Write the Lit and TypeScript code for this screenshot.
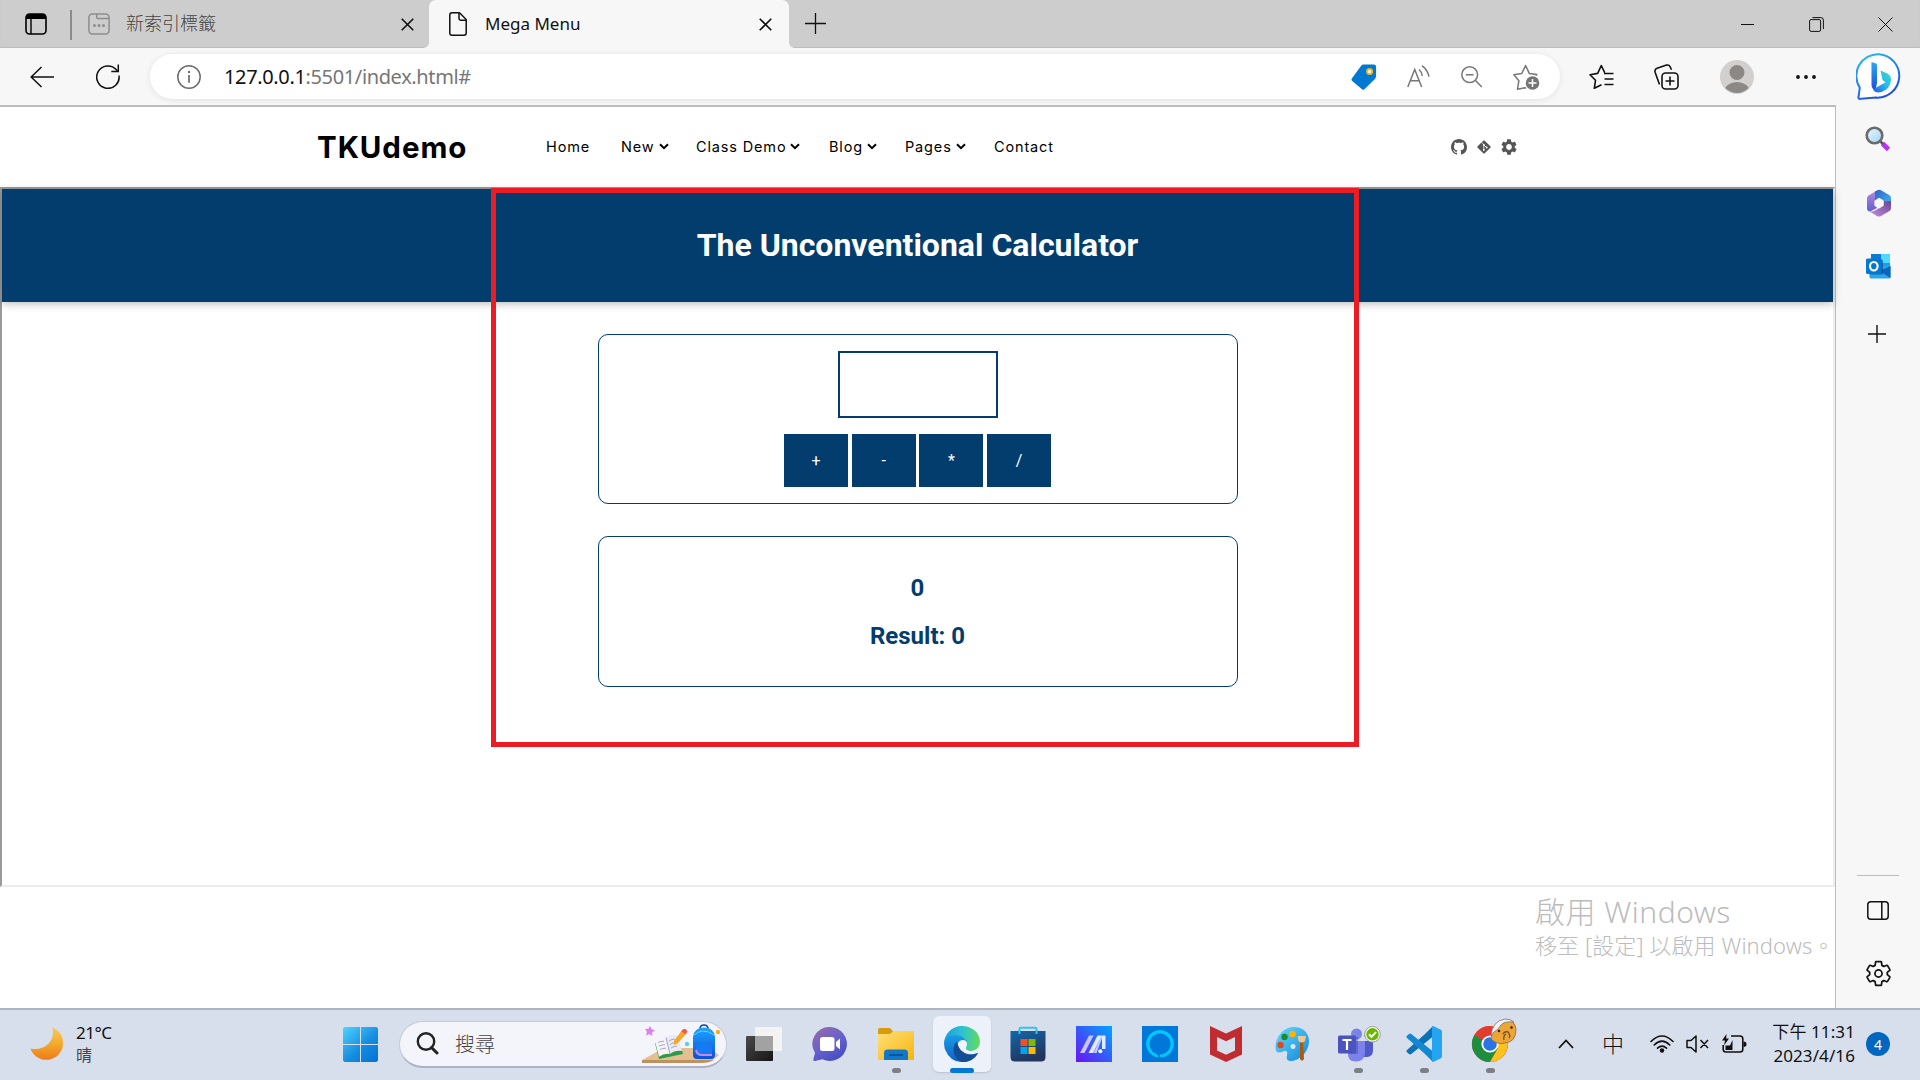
import { LitElement, html, css, svg } from "lit";
import { customElement } from "lit/decorators.js";

const GEAR_OUTER =
  "M19.14 12.94c.04-.3.06-.61.06-.94 0-.32-.02-.64-.07-.94l2.03-1.58a.49.49 0 0 0 .12-.61l-1.92-3.32a.488.488 0 0 0-.59-.22l-2.39.96c-.5-.38-1.03-.7-1.62-.94l-.36-2.54a.484.484 0 0 0-.48-.41h-3.84c-.24 0-.43.17-.47.41l-.36 2.54c-.59.24-1.13.57-1.62.94l-2.39-.96c-.22-.08-.47 0-.59.22L2.74 8.87c-.12.21-.08.47.12.61l2.03 1.58c-.05.3-.09.63-.09.94s.02.64.07.94l-2.03 1.58a.49.49 0 0 0-.12.61l1.92 3.32c.12.22.37.29.59.22l2.39-.96c.5.38 1.03.7 1.62.94l.36 2.54c.05.24.24.41.48.41h3.84c.24 0 .44-.17.47-.41l.36-2.54c.59-.24 1.13-.56 1.62-.94l2.39.96c.22.08.47 0 .59-.22l1.92-3.32c.12-.22.07-.47-.12-.61z";
const GEAR_HOLE =
  "M12 15.6c-1.98 0-3.6-1.62-3.6-3.6s1.62-3.6 3.6-3.6 3.6 1.62 3.6 3.6-1.62 3.6-3.6 3.6z";

const icon = (w: number, h: number, body: unknown, vb?: string) =>
  html`<svg width=${w} height=${h} viewBox=${vb ?? `0 0 ${w} ${h}`} fill="none">${body}</svg>`;

/* ---------- browser chrome ---------- */
const tabActions = icon(22, 22, svg`
  <rect x="1" y="1" width="20" height="20" rx="3.5" stroke="#000" stroke-width="1.6"/>
  <path d="M1 6V4a3 3 0 0 1 3-3h14a3 3 0 0 1 3 3v2z" fill="#000"/><path d="M6 5v16" stroke="#000" stroke-width="1.4"/>`);
const newTabIcon = icon(22, 22, svg`
  <g stroke="#8d8d8d" stroke-width="1.5"><rect x=".9" y=".9" width="20.2" height="20.2" rx="3.5"/>
  <path d="M8.7 1v3.2q0 1.3 1.3 1.3h11"/></g>
  <g fill="#8d8d8d"><circle cx="6.5" cy="12.5" r="1.5"/><circle cx="11" cy="12.5" r="1.5"/><circle cx="15.5" cy="12.5" r="1.5"/></g>`);
const closeIcon = icon(13, 13, svg`<path d="M.7.7l11.6 11.6M12.3.7L.7 12.3" stroke="#111" stroke-width="1.6"/>`);
const docIcon = icon(18, 24, svg`
  <path d="M3 .8h7.500L17.200 7.500V21q0 2.200-2.200 2.200H3Q.8 23.200 .8 21V3Q.8 .8 3 .8z" stroke="#111" stroke-width="1.5" stroke-linejoin="round"/>
  <path d="M10 1v5.500q0 1.700 1.700 1.700H17" stroke="#111" stroke-width="1.5"/>`);
const plusIcon = icon(21, 21, svg`<path d="M10.500 0v21M0 10.500h21" stroke="#111" stroke-width="1.3"/>`);
const minIcon = icon(15, 15, svg`<path d="M1 7.500h13" stroke="#111" stroke-width="1"/>`);
const restoreIcon = icon(15, 15, svg`<rect x=".6" y="2.600" width="11" height="11.800" rx="1.500" stroke="#111"/>
  <path d="M3.500 .6h8.400q2.500 0 2.500 2.500v9" stroke="#111"/>`);
const winClose = icon(15, 15, svg`<path d="M.5.5l14 14M14.500.5l-14 14" stroke="#111" stroke-width="1"/>`);

const backIcon = icon(24, 22, svg`<path d="M24 11H1.200M11.500 1L1.200 11l10.300 10" stroke="#111" stroke-width="1.500"/>`);
const reloadIcon = icon(24, 25, svg`<path d="M23 11.500A11.200 11.200 0 1 1 20.200 5.600L21.500 7.200" stroke="#111" stroke-width="1.500"/>
  <path d="M22.300 .5v7h-7" stroke="#111" stroke-width="1.500"/>`);
const infoIcon = icon(24, 24, svg`<circle cx="12" cy="12" r="11.200" stroke="#6b6b6b" stroke-width="1.500"/>
  <path d="M12 10v7.800" stroke="#6b6b6b" stroke-width="1.700"/><circle cx="12" cy="7" r="1.200" fill="#6b6b6b"/>`);
const tagIcon = icon(26, 26, svg`<path d="M12.500 .6h10.300q2.300 0 2.300 2.300v9.200q0 1.600-1.200 3L13.700 25q-1.500 1.300-3 0L1.200 17q-1.400-1.500 0-3L10 2q1-1.400 2.500-1.400z" fill="#0078d4"/>
  <circle cx="18.600" cy="7.500" r="2.700" fill="#e8eef2" stroke="#f2b705" stroke-width="1.700"/>`);
const readIcon = icon(23, 23, svg`<g stroke="#777" stroke-width="1.500"><path d="M.8 22L7.700 4.500 14.700 22M3.200 15.800h9"/>
  <path d="M12.200 4.500q2.600 2.500 3.100 6.500M15 .6q5.800 4.600 7 11"/></g>`);
const zoomOutIcon = icon(22, 22, svg`<g stroke="#777" stroke-width="1.500"><circle cx="8.700" cy="8.700" r="7.900"/><path d="M14.500 14.500l6.300 6.500M4.800 8.700h7.800"/></g>`);
const starPlus = icon(27, 26, svg`<path d="M13 24.500l-1-.8-7.500 1.500 1.400-8.500L.9 10.700l7.900-1.300L12.600 1.500l3.700 7.900 7.500 1.200-1.800 2" stroke="#777" stroke-width="1.500" stroke-linejoin="round"/>
  <circle cx="19.500" cy="19" r="7.900" fill="#fff"/><circle cx="19.500" cy="19" r="6.800" fill="#757575"/><path d="M19.500 15v8M15.500 19h8" stroke="#fff" stroke-width="1.500"/>`);
const favIcon = icon(26, 25, svg`<path d="M12.500 20.800l-7.200 3.500 1.200-8L1 10.700l7.700-1.300L12.300 1.500l3.400 7.200M15 9.500h9.500M15.500 15h9M15.500 20.500h9" stroke="#111" stroke-width="1.600" stroke-linejoin="round"/>`);
const collIcon = icon(26, 26, svg`<g stroke="#111" stroke-width="1.600"><rect x="8" y="9" width="16" height="16" rx="3.500"/>
  <path d="M16 12.500v9M11.500 17h9M5.500 20.500L1.100 8.200q-.8-3 2-4L12.500 1.100q2.500-.6 3.700 1.700l1.300 3"/></g>`);
const avatarIcon = icon(34, 36, svg`<defs><clipPath id="av"><circle cx="17" cy="18" r="16"/></clipPath></defs>
  <circle cx="17" cy="18" r="17" fill="#d2d0ce"/><g clip-path="url(#av)" fill="#8b8886"><circle cx="17" cy="13.500" r="7.500"/><ellipse cx="17" cy="32" rx="12.500" ry="9"/></g>`);
const dotsIcon = icon(20, 4, svg`<g fill="#111"><circle cx="2" cy="2" r="1.900"/><circle cx="10" cy="2" r="1.900"/><circle cx="18" cy="2" r="1.900"/></g>`);
const bingIcon = icon(46, 47, svg`<defs>
  <linearGradient id="bo" x1="0" y1="0" x2="0.500" y2="1"><stop stop-color="#27c6ee"/><stop offset=".5" stop-color="#2288e8"/><stop offset="1" stop-color="#2351d8"/></linearGradient>
  <linearGradient id="bb" x1="0" y1="0" x2="0" y2="1"><stop stop-color="#2aa7f2"/><stop offset="1" stop-color="#1b4fdb"/></linearGradient>
  <linearGradient id="bs" x1="1" y1="0" x2="0" y2="1"><stop stop-color="#3fe0b8"/><stop offset=".5" stop-color="#26b8f0"/><stop offset="1" stop-color="#2358e0"/></linearGradient></defs>
  <path d="M23 1.200a21.700 21.700 0 1 1-3 43.400l-15 1.200q-3.200 .6-2.400-2.500l1.200-8.600A21.700 21.700 0 0 1 23 1.200z" fill="#fff" stroke="url(#bo)" stroke-width="2"/>
  <path d="M15.500 9l4.500 1.600q1 .4 1 1.600v17.800l-1.500 7.500q-4-1.500-4-6z" fill="url(#bb)"/>
  <path d="M24.500 17.500l7 3q4 2.500 3.500 7-1 8.500-9.500 11.500-6 1.500-8.500-2.500l12.500-7.200-3-2.300z" fill="url(#bs)"/>`);

/* ---------- site navigation ---------- */
const chevron = icon(10, 7, svg`<path d="M1 1.200l4 4 4-4" stroke="#000" stroke-width="2"/>`);
const github = icon(16, 16, svg`<path fill="#555" d="M8 0C3.580 0 0 3.580 0 8c0 3.540 2.290 6.530 5.470 7.590.4.070.55-.17.55-.38 0-.19-.01-.82-.01-1.490-2.010.37-2.530-.49-2.690-.94-.09-.23-.48-.94-.82-1.130-.28-.15-.68-.52-.01-.53.63-.01 1.080.58 1.230.82.72 1.210 1.870.87 2.330.66.070-.52.280-.87.510-1.070-1.780-.2-3.640-.89-3.640-3.950 0-.87.31-1.590.82-2.150-.08-.2-.36-1.020.08-2.120 0 0 .67-.21 2.200.82.640-.18 1.320-.27 2-.27s1.360.09 2 .27c1.530-1.040 2.200-.82 2.200-.82.440 1.100.160 1.920.080 2.120.510.560.820 1.270.820 2.150 0 3.070-1.870 3.750-3.650 3.950.290.250.540.730.540 1.480 0 1.070-.01 1.930-.01 2.200 0 .210.150.460.550.380A8.010 8.010 0 0016 8c0-4.420-3.580-8-8-8z"/>`);
const git = icon(14, 14, svg`<rect x="2" y="2" width="10" height="10" rx="1" transform="rotate(45 7 7)" fill="#555"/>
  <path d="M4.500 2.200l2.300 2.300v5.500M6.800 5l2.900 2.500" stroke="#fff" stroke-width=".8"/><circle cx="6.800" cy="10" r=".9" fill="#fff"/><circle cx="9.700" cy="7.500" r=".9" fill="#fff"/><circle cx="6.800" cy="4.900" r=".9" fill="#fff"/>`);
const gearSolid = icon(16, 16, svg`<path fill="#555" fill-rule="evenodd" d="${GEAR_OUTER}${GEAR_HOLE}"/>`, "2 2 20 20");

/* ---------- sidebar ---------- */
const sideSearch = icon(26, 26, svg`<defs><linearGradient id="gl" x1="0" y1="0" x2="1" y2="1"><stop stop-color="#eaf7ff"/><stop offset="1" stop-color="#9fd4f5"/></linearGradient></defs>
  <path d="M17.500 17.500l6 6" stroke="#b633f5" stroke-width="4.600"/><path d="M15 15l3 3" stroke="#555" stroke-width="2.500"/>
  <circle cx="9.500" cy="9.500" r="7.800" fill="url(#gl)" stroke="#6b6b6b" stroke-width="2.600"/>`);
const side365 = icon(26, 28, svg`<defs>
  <linearGradient id="ma" x1="0" y1="0" x2="0" y2="1"><stop stop-color="#b68adf"/><stop offset="1" stop-color="#5f5fd0"/></linearGradient>
  <linearGradient id="mb" x1="0" y1="0" x2="1" y2="1"><stop stop-color="#2f62c8"/><stop offset="1" stop-color="#45b9ee"/></linearGradient>
  <linearGradient id="mc" x1="0" y1="1" x2="1" y2="0"><stop stop-color="#c290e4"/><stop offset="1" stop-color="#6a4495"/></linearGradient></defs>
  <path d="M11 1.500L2.500 6.500Q1 7.500 1 9.500v10q0 2.500 3 3l7-3.500-2-5 0-6z" fill="url(#ma)"/>
  <path d="M9 2.500L12 1q1.500-.6 3 .2l8.500 5Q25 7.200 25 9v8l-7-2-1-4-4-2-4 3z" fill="url(#mb)"/>
  <path d="M25 12v7q0 2-1.500 3L15 27q-2 1-4 0L3.500 22.500Q7 23 10 21l7-4.500 1-4z" fill="url(#mc)"/>
  <path d="M13 9l4.600 2.700v5l-4.600 2.700-4.600-2.700v-5z" fill="#f7f7f7"/>`);
const sideOutlook = icon(25, 25, svg`<rect x="5" y="0" width="19" height="16" rx="1" fill="#1aa0e6"/><path d="M14 0h9q1 0 1 1v8H14z" fill="#50d9ff"/><path d="M5 0h10v8H5z" fill="#0f78d0"/>
  <path d="M3.500 13L24.500 12v11q0 1.500-1.500 1.500H5q-1.500 0-1.500-1.500z" fill="#28a8ea"/><path d="M24.500 12v12l-11-7z" fill="#0d65ba"/>
  <rect x="3" y="5.500" width="14" height="15" rx="1.500" fill="#0a3f7c" opacity=".6"/><rect x="0" y="4.500" width="15.500" height="15.500" rx="1.500" fill="#0078d4"/><ellipse cx="7.800" cy="12.200" rx="3.800" ry="4.200" stroke="#fff" stroke-width="2.200"/>`);
const sidePlus = icon(18, 18, svg`<path d="M9 0v18M0 9h18" stroke="#111" stroke-width="1.400"/>`);
const sidePanel = icon(22, 19, svg`<g stroke="#111" stroke-width="1.500"><rect x=".8" y=".8" width="20.400" height="17.400" rx="3"/><path d="M14.800 1v17"/></g>`);
const sideGear = icon(27, 27, svg`<g stroke="#111" stroke-width="1.400"><path d="${GEAR_OUTER}" stroke-linejoin="round"/><circle cx="12" cy="12" r="2.900"/></g>`, "1 1 22 22");

/* ---------- taskbar ---------- */
const moon = icon(34, 34, svg`<defs><linearGradient id="mo" x1="0" y1="0" x2="0" y2="1"><stop stop-color="#f8c95f"/><stop offset=".5" stop-color="#f3ab2c"/><stop offset="1" stop-color="#ee7a1c"/></linearGradient></defs>
  <path d="M22 .5C31 3.500 34.500 12 32.500 20.500 28 36 6.500 37.500 .3 21.500 15 25 26.500 12 22 .5z" fill="url(#mo)"/>`);
const startIcon = icon(35, 35, svg`<defs><linearGradient id="st" gradientUnits="userSpaceOnUse" x1="0" y1="0" x2="32" y2="35"><stop stop-color="#4fd3ff"/><stop offset=".6" stop-color="#138bdf"/><stop offset="1" stop-color="#0674d6"/></linearGradient></defs>
  <path d="M1.500 0H17v17H0V1.500zM18 0h15.500L35 1.500V17H18zM0 18h17v17H1.500L0 33.500zM18 18h17v15.500L33.500 35H18z" fill="url(#st)"/>`);
const magnifier = icon(23, 23, svg`<circle cx="10" cy="9.500" r="8.200" stroke="#222" stroke-width="2.400"/><path d="M15.500 15.500l5.500 5.500" stroke="#222" stroke-width="3" stroke-linecap="round"/>`);
const school = icon(80, 40, svg`<defs><linearGradient id="bp" x1="0" y1="0" x2="0" y2="1"><stop stop-color="#1da4ff"/><stop offset="1" stop-color="#0a52d8"/></linearGradient></defs>
  <path d="M0 36L22 24h44l11 7-6 5z" fill="#e4bf91"/><path d="M0 36h72q-5 3-12 3H0z" fill="#bd9160"/>
  <path d="M8 2l1.700 3.300 3.300 1-3 2.200 .5 3.500-3.300-2-3.200 1.500 1-3.500L3 5l3.500-.3z" fill="#e27cf5"/>
  <path d="M13 19l4 16 24-5-1-4z" fill="#2f9a45"/>
  <path d="M12.500 15.500q6-3.500 11.500-2l4 16.500q-6-1-11 2.800z" fill="#f6f4fa"/><path d="M24 13.500q5-3.500 11.500-2.500L40 27q-7-1-12 3z" fill="#ebe9f2"/>
  <path d="M24 13.500l4 16.500M16 18.500q3-1.500 6-1.300M17 22q3-1.500 6-1.300M18 25.500q3-1.500 6-1.300M27 17q3-2 6-2M28 20.500q3-2 6-2M29 24q3-2 6-2" stroke="#9aa0b8" stroke-width=".9"/>
  <path d="M32 17L39 7.500l4.500 3L36 19l-4 2z" fill="#f8a722"/><path d="M39 7.500q2.500-4 5-2t-.5 5z" fill="#f25a4d"/>
  <circle cx="45" cy="20" r="2.200" fill="#5cd1e6"/><circle cx="76" cy="8" r="2.200" fill="#f9b017"/>
  <path d="M58 5q0-4 4-4t4 4" stroke="#14439e" stroke-width="1.600"/><path d="M51 13Q52 3.500 62 3.500T73 13v18q0 4-4 4H55q-4 0-4-4z" fill="url(#bp)"/><path d="M52 11q9-8 20 0" stroke="#7ec7ff"/>
  <path d="M54 23q0-4 8-4t8 4v6q0 2-2 2H56q-2 0-2-2z" fill="#177af5"/><path d="M54 26q1 5 6 5h10" stroke="#c58af5" stroke-width="2"/>`);
const taskView = icon(36, 34, svg`<defs><linearGradient id="tv" x1="0" y1="0" x2="1" y2="1"><stop stop-color="#4a4a4a"/><stop offset="1" stop-color="#151515"/></linearGradient></defs>
  <rect x="0" y="9" width="27" height="25" rx="1" fill="url(#tv)"/><rect x="9" y="0" width="27" height="24" rx="1" fill="#f3f3f3"/><path d="M9 9h18v15H9z" fill="#a2a2a2"/>`);
const chat = icon(36, 36, svg`<defs><linearGradient id="ch" x1="0" y1="0" x2=".6" y2="1"><stop stop-color="#9a6ba8"/><stop offset=".6" stop-color="#6561cc"/><stop offset="1" stop-color="#4a4fc0"/></linearGradient></defs>
  <path d="M18 1a17 17 0 1 1-7.500 32.300L3 35q-2.200 .3-1.600-2L3 27A17 17 0 0 1 18 1z" fill="url(#ch)"/>
  <rect x="8" y="11" width="14.500" height="14" rx="2.500" fill="#fff"/><path d="M24 16l4-3.500v11L24 20z" fill="#fff"/>`);
const folder = icon(36, 34, svg`<defs><linearGradient id="fo" x1="0" y1="0" x2="1" y2="1"><stop stop-color="#ffe07a"/><stop offset="1" stop-color="#f7b50c"/></linearGradient></defs>
  <path d="M0 8V2.500Q0 1 1.500 1H11q1 0 2 1l2.500 3-3 3z" fill="#d99a0b"/><path d="M0 7h11q1.500 0 2.500-1.200L15 4h19.500Q36 4 36 5.500V33H0z" fill="url(#fo)"/>
  <path d="M6 33v-7q0-3.500 3.500-3.500h17Q30 22.500 30 26v7z" fill="#1277c9"/><path d="M11 28h14" stroke="#0a4f8f" stroke-width="1.600"/>`);
const edge = icon(36, 36, svg`<defs>
  <linearGradient id="e1" x1="0" y1=".5" x2="1" y2=".6"><stop stop-color="#1a9fe0"/><stop offset=".5" stop-color="#2fc3d0"/><stop offset="1" stop-color="#62dc58"/></linearGradient>
  <linearGradient id="e2" x1=".5" y1="0" x2=".5" y2="1"><stop stop-color="#1a9de8"/><stop offset="1" stop-color="#0c62c0"/></linearGradient></defs>
  <path d="M0 18C0 8 8 0 18 0s18 7 18 15.500c0 6-4.500 9.500-9.500 9.500-4.500 0-5.500-2-4.500-3.500 3-5-1.500-9-6-9.500Q4 11 0 18z" fill="url(#e1)"/>
  <path d="M0 18C1 11 6.500 8.500 12 9c5 .3 9 3 10.500 6.500-3-2.500-9-1.500-9.500 5-.5 6 4 13 10 14.800Q20 36.300 17 36 6 35.500 .8 23z" fill="url(#e2)"/>
  <path d="M13 15.500C7 20 8.500 33 18.500 36c7 .5 13-3.500 15.800-9.200-6 2.800-18.300 3.200-21.300-11.300z" fill="#124d96"/>
  <path d="M14.500 19c0-3 2-4.800 4.500-4.800 3 0 4.500 2.800 3 6.300-1 2 1 4.300 4.500 4.500Q17 28.500 14.500 19z" fill="#eef4fa"/>`);
const store = icon(36, 36, svg`<defs><linearGradient id="so" x1="0" y1="0" x2=".4" y2="1"><stop stop-color="#1268ac"/><stop offset="1" stop-color="#22355f"/></linearGradient></defs>
  <path d="M9.500 8V3Q9.500 1.800 11 1.800h14Q26.500 1.800 26.500 3v5" stroke="#35c1f1" stroke-width="2"/><path d="M.5 5h35v26q0 4.500-4.500 4.500H5Q.5 35.500 .5 31z" fill="url(#so)"/><path d="M9.500 4v4M26.500 4v4" stroke="#35c1f1" stroke-width="2"/>
  <path d="M10.500 13h7v7h-7z" fill="#f25022"/><path d="M18.500 13h7v7h-7z" fill="#7fba00"/><path d="M10.500 21h7v7h-7z" fill="#00a4ef"/><path d="M18.500 21h7v7h-7z" fill="#ffb900"/>`);
const myasus = icon(36, 36, svg`<defs><linearGradient id="as" x1="0" y1="1" x2="1" y2="0"><stop stop-color="#6a12f5"/><stop offset=".45" stop-color="#3a55f8"/><stop offset="1" stop-color="#00a5ff"/></linearGradient></defs>
  <rect width="36" height="36" fill="url(#as)"/><path d="M4 27L13 9.500h4.500L8.500 27z" fill="#c9c4fb"/><path d="M12.500 27L21.500 9.500H26L17 27z" fill="#e4e8ff"/><path d="M26 9.500h3.500V23H26z" fill="#e0ecff"/><path d="M26 12v-2.500L17.500 27h3z" fill="#fff" opacity=".7"/><circle cx="24.300" cy="25.200" r="2" fill="#fff"/>`);
const alexa = icon(36, 36, svg`<rect width="36" height="36" fill="#0077d9"/><path d="M16.500 31.500A13.800 13.800 0 1 1 19.500 31.500Q16.500 30 18 28.500A10.500 10.500 0 1 0 14 27.700Q16.500 29 16.500 31.500z" fill="#00c8ff"/>`);
const mcafee = icon(32, 36, svg`<path d="M0 0l16 7.500L32 0v28.500L16 36 0 28.500zM7 11v13.500l9 4.300 9-4.300V11l-9 4.300z" fill="#c12c31" fill-rule="evenodd"/>`);
const paint = icon(36, 36, svg`<defs><linearGradient id="pa" x1="0" y1="0" x2="1" y2="1"><stop stop-color="#63dcff"/><stop offset="1" stop-color="#1384d8"/></linearGradient></defs>
  <path d="M20 1c9 0 15 6 15 14 0 11-10 20-18 20-4 0-5-2.500-4-5.500 1-4-1-6-4-4-4 2-7.500 1.500-7.500-3.500C1.500 11 9 1 20 1z" fill="url(#pa)"/>
  <circle cx="19" cy="20.500" r="2.500" fill="#d8e8f5"/><circle cx="18.500" cy="8" r="3.300" fill="#ffb400"/><circle cx="10.500" cy="11" r="3.200" fill="#1f8a2a"/><circle cx="6.500" cy="19" r="3.200" fill="#e2461c"/>
  <path d="M26 15h3l1 18q-2 3-4 0z" fill="#a85c12"/><path d="M23.500 10h8.500l-1 5q-3.300 3-6.500 0z" fill="#e8c99a"/>`);
const teams = icon(46, 37, svg`<g transform="translate(2 0)"><circle cx="19.500" cy="8" r="5.500" fill="#7b83eb"/><circle cx="31.500" cy="9" r="4" fill="#5059c9"/><path d="M27 15h9v9q0 7-6 7h-5z" fill="#5059c9"/>
  <path d="M11 15h17v11q0 9-8.500 9.500T11 28z" fill="#7b83eb"/><rect x="12" y="11" width="9" height="17" fill="#3b3f9e" opacity=".4"/><rect x="1" y="9.500" width="18" height="18" rx="1.500" fill="#4b53bc"/>
  <path d="M5.500 14h9M10 14v10" stroke="#fff" stroke-width="2.200"/><circle cx="35.500" cy="8.300" r="7.800" fill="#fff" stroke="#999" stroke-width="1"/><circle cx="35.500" cy="8.300" r="6.200" fill="#6bb700"/><path d="M32 8.300l2.500 2.600 4.600-4.800" stroke="#fff" stroke-width="2"/></g>`);
const vscode = icon(36, 36, svg`<path d="M27 0l-8 8L6 19.500 1 24q-1.200 1.200 0 2.300l2 1.700q1.200 .8 2.300 0L27 10.500z" fill="#0a73b8"/><path d="M27 36l-8-8L1 12q-1.200-1.200 0-2.300L3 8q1.200-.8 2.300 0L27 25.500z" fill="#1188cf"/>
  <path d="M27 0l7.500 3.500Q36 4.200 36 6v24q0 1.800-1.500 2.500L27 36q-1-.4-1-1.500v-33Q26 .4 27 0z" fill="#25a4f0"/>`);
const chrome = icon(54, 52, svg`<g transform="translate(9 8)"><circle cx="18" cy="18" r="18" fill="#e33b2e"/>
  <path d="M18 18L2.400 9A18 18 0 0 0 18 36l7.800-13.500z" fill="#1e8e3e"/><path d="M18 10h15.900A18 18 0 0 1 18 36l8-14z" fill="#fcc31e"/>
  <path d="M18 18L2.400 9A18 18 0 0 1 33.800 9.800H18z" fill="#e33b2e"/><circle cx="18" cy="18" r="8.600" fill="#fff"/><circle cx="18" cy="18" r="6.800" fill="#2a73e8"/></g>
  <path d="M28 21Q30 4 42 1.500q10 0 11 10Q53 24 42 25q-8 2-14-4z" fill="#eda536" stroke="#8b6b3c" stroke-width=".8"/><path d="M28 18Q29 3 42 1q6 0 9 3-10-1-13 3-3 5-7 7z" fill="#f2f2f2" stroke="#777" stroke-width=".8"/>
  <circle cx="36" cy="13" r="1.200" fill="#222"/><circle cx="48.500" cy="9.500" r="1.200" fill="#222"/><path d="M40 16q3-4 6-1M41 22q-1-4 2-6M46 20q2-3-1-5" stroke="#6e4f25" stroke-width="1.300"/>`);
const trayUp = icon(16, 10, svg`<path d="M1 9l7-7.500L15 9" stroke="#111" stroke-width="1.800"/>`);
const wifi = icon(24, 18, svg`<g stroke="#111" stroke-width="1.600" stroke-linecap="round"><path d="M1 6.500Q12-4.500 23 6.500M4.200 10Q12 2.300 19.800 10M7.500 13.200q4.500-4.200 9 0"/></g><circle cx="12" cy="15.500" r="2.200" fill="#111"/>`);
const mute = icon(23, 18, svg`<path d="M1 5.500h4l5-4.500v16l-5-4.500H1zM14.500 5l7.500 8M22 5l-7.500 8" stroke="#111" stroke-width="1.500" stroke-linejoin="round"/>`);
const battery = icon(25, 20, svg`<path d="M9 2h9q2.800 0 2.800 2.800v10.400q0 2.800-2.800 2.800H4q-2.800 0-2.800-2.800V11" stroke="#111" stroke-width="1.600"/><path d="M3.500 16V11.500H8L10.500 6v10zM21.500 7.500q3 0 3 2.700t-3 2.700z" fill="#111"/><path d="M4.500 0L0 6.500h3l-1 5 5-7H4.200z" fill="#111"/>`);

const apps = [
  { icon: taskView }, { icon: chat }, { icon: folder, running: true }, { icon: edge, active: true },
  { icon: store }, { icon: myasus }, { icon: alexa }, { icon: mcafee }, { icon: paint },
  { icon: teams, running: true }, { icon: vscode, running: true }, { icon: chrome, running: true },
] as { icon: unknown; running?: boolean; active?: boolean }[];

@customElement("browser-chrome")
class BrowserChrome extends LitElement {
  static styles = css`
    :host { display: block; font-family: "Noto Sans", "Noto Sans CJK TC", sans-serif; color: #111; }
    svg { display: block; flex: none; }
    .tabs { height: 48px; display: flex; background: #cdcdcd; box-shadow: inset 0 -1px 1px #bdbdbd; }
    .actions { width: 68px; padding: 0 0 1px 2px; display: flex; align-items: center; justify-content: center; }
    .sep { width: 2px; height: 30px; margin-top: 10px; background: #8b8b8b; }
    .tab { width: 326px; padding: 0 15px 0 16px; display: flex; align-items: center; font-size: 18px; }
    .tab.idle { color: #444; font-weight: 300; }
    .tab .name { flex: 1; white-space: nowrap; }
    .idle .name { padding: 0 0 5px 16px; }
    .tab.open { position: relative; width: 323px; padding: 0 17px 0 20px; background: #f7f7f7; border-radius: 7px 7px 0 0; }
    .tab.open::before, .tab.open::after { content: ""; position: absolute; bottom: 0; width: 5px; height: 5px; }
    .tab.open::before { left: -5px; background: radial-gradient(circle at 0 0, #cdcdcd 4.500px, #f7f7f7 5px); }
    .tab.open::after { right: -5px; background: radial-gradient(circle at 100% 0, #cdcdcd 4.500px, #f7f7f7 5px); }
    .open .name { padding: 0 0 1px 18px; font-size: 17px; }
    .x { padding-top: 1px; }
    .plus { padding: 13px 0 0 16px; }
    .controls { margin-left: auto; display: grid; grid-template-columns: repeat(3, 69px); place-items: center; }
    .bar { height: 57px; box-sizing: border-box; background: #f7f7f7; display: grid; grid-template-columns: 83px 49px 18px 1410px 83px 48px 91px 48px 97px; place-items: center; }
    .pill { grid-column: 4; justify-self: stretch; height: 45px; border-radius: 23px; background: #fff; box-shadow: 0 1px 6px rgba(0, 0, 0, .09); display: flex; align-items: center; padding: 0 7px 0 27px; }
    .url { flex: 1; padding: 0 0 0 23px; font-size: 20px; color: #767676; letter-spacing: -.36px; }
    .host { color: #111; }
    .tools { display: grid; grid-template-columns: repeat(4, 54px); place-items: center; }
  `;
  render() {
    return html`
      <div class="tabs">
        <div class="actions">${tabActions}</div><div class="sep"></div>
        <div class="tab idle">${newTabIcon}<span class="name">新索引標籤</span><span class="x">${closeIcon}</span></div>
        <div class="tab open">${docIcon}<span class="name">Mega Menu</span><span class="x">${closeIcon}</span></div>
        <div class="plus">${plusIcon}</div>
        <div class="controls">${minIcon}${restoreIcon}${winClose}</div>
      </div>
      <div class="bar">
        ${backIcon}${reloadIcon}
        <div class="pill">${infoIcon}<span class="url"><span class="host">127.0.0.1</span>:5501/index.html#</span>
          <div class="tools">${tagIcon}${readIcon}${zoomOutIcon}${starPlus}</div></div>
        ${favIcon}${collIcon}${avatarIcon}${dotsIcon}${bingIcon}
      </div>`;
  }
}

@customElement("site-nav")
class SiteNav extends LitElement {
  static styles = css`
    :host { height: 80px; box-sizing: border-box; padding: 0 318px 1px 317px; display: flex; align-items: center; font-family: Inter, sans-serif; color: #000; }
    svg { display: block; }
    .brand { width: 229px; font-size: 29.500px; font-weight: 700; letter-spacing: .95px; }
    .menu { display: grid; grid-template-columns: 75px 75px 133px 76px 89px auto; font-size: 14.500px; letter-spacing: .85px; }
    .item { display: flex; align-items: center; gap: 4px; white-space: nowrap; }
    .social { margin-left: auto; display: flex; align-items: center; gap: 10px; }
  `;
  render() {
    const items: [string, boolean][] = [["Home", false], ["New", true], ["Class Demo", true], ["Blog", true], ["Pages", true], ["Contact", false]];
    return html`<div class="brand">TKUdemo</div>
      <div class="menu">${items.map(([t, c]) => html`<span class="item">${t}${c ? chevron : ""}</span>`)}</div>
      <div class="social">${github}${git}${gearSolid}</div>`;
  }
}

@customElement("calculator-frame")
class CalculatorFrame extends LitElement {
  static styles = css`
    :host { display: block; position: relative; box-sizing: border-box; width: 1835px; height: 700px; border: 2px solid; border-color: #9a9a9a #ededed #ededed #9a9a9a; background: #fff; font-family: Roboto, sans-serif; }
    .head { height: 113px; box-sizing: border-box; padding-bottom: 2px; background: #023d6d; color: #fff; display: flex; align-items: center; justify-content: center; box-shadow: 0 2px 8px rgba(0, 0, 0, .26); }
    h1 { margin: 0; font-size: 32px; font-weight: 700; }
    .cards { padding-top: 32px; display: flex; flex-direction: column; align-items: center; gap: 32px; }
    .card { box-sizing: border-box; width: 640px; border: 1px solid #023d6d; border-radius: 10px; display: flex; flex-direction: column; align-items: center; }
    .entry { height: 170px; padding: 16px; gap: 16px; }
    .field { box-sizing: border-box; width: 160px; height: 67px; border: 2px solid #023d6d; }
    .ops { display: flex; gap: 3.700px; }
    .op { width: 64px; height: 53px; background: #023d6d; color: #fff; display: grid; place-items: center; font-size: 16px; }
    .result { height: 151px; justify-content: center; color: #023d6d; font-size: 24px; font-weight: 700; line-height: 48px; }
    .mark { position: absolute; box-sizing: border-box; left: 489px; top: -1px; width: 868px; height: 559px; border: 5px solid #ed1c24; }
  `;
  render() {
    return html`<div class="head"><h1>The Unconventional Calculator</h1></div>
      <div class="cards">
        <div class="card entry"><div class="field"></div><div class="ops">${["+", "-", "*", "/"].map((o) => html`<span class="op">${o}</span>`)}</div></div>
        <div class="card result"><span>0</span><span>Result: 0</span></div>
      </div>
      <div class="mark"></div>`;
  }
}

@customElement("side-rail")
class SideRail extends LitElement {
  static styles = css`
    :host { width: 84px; height: 903px; box-sizing: border-box; background: #f7f7f7; padding-top: 21px; display: flex; flex-direction: column; align-items: center; }
    svg { display: block; flex: none; }
    .s365 { margin: 37px 0; padding-left: 1px; }
    .out { padding-left: 1px; }
    .add { margin-top: 46px; padding-right: 2px; }
    .line { width: 42px; height: 1px; background: #bdbdbd; margin-top: auto; }
    .panel { margin: 25px 0 40px; }
    .gear { margin-bottom: 21px; }
  `;
  render() {
    return html`${sideSearch}<div class="s365">${side365}</div><div class="out">${sideOutlook}</div><div class="add">${sidePlus}</div>
      <div class="line"></div><div class="panel">${sidePanel}</div><div class="gear">${sideGear}</div>`;
  }
}

@customElement("task-bar")
class TaskBar extends LitElement {
  static styles = css`
    :host { height: 72px; box-sizing: border-box; border-top: 2px solid #aeb4c0; background: #d8dfec; display: flex; align-items: center; padding-bottom: 2px; font-family: "Noto Sans", "Noto Sans CJK TC", sans-serif; color: #111; }
    svg { display: block; flex: none; }
    .weather { width: 343px; box-sizing: border-box; padding: 0 0 1px 30px; display: flex; align-items: center; gap: 12px; font-size: 17px; line-height: 23px; }
    .temp { letter-spacing: -.5px; }
    .sky { color: #444; font-size: 16px; }
    .search { box-sizing: border-box; width: 328px; height: 47px; margin: 0 4px 0 21px; padding: 0 4px 0 16px; border: 1px solid #c3cada; border-bottom: 2px solid #aab2c4; border-radius: 24px; background: #f3f5fa; display: flex; align-items: center; font-size: 20px; font-weight: 300; color: #444; }
    .search span { flex: 1; padding: 0 0 1px 16px; }
    .art { padding-top: 1px; }
    .app { position: relative; width: 66px; height: 56px; flex: none; display: flex; align-items: center; justify-content: center; }
    .app.active::before { content: ""; position: absolute; inset: 0 4px; border-radius: 6px; background: #edf1f9; box-shadow: 0 1px 2px #b9c1d1; }
    .app svg { position: relative; }
    .app.running::after, .app.active::after { content: ""; position: absolute; left: 29px; bottom: -1px; width: 9px; height: 5px; border-radius: 3px; background: #7c7f86; }
    .app.active::after { left: 21px; width: 24px; background: #0078d4; }
    .up { margin-left: 35px; }
    .ime { width: 22px; margin: 0 26px 3px 28px; font-size: 22px; font-weight: 300; line-height: 24px; }
    .mute { margin: 0 13px 0 12px; }
    .clock { width: 109px; margin-left: -1px; text-align: right; font-size: 17px; line-height: 24px; white-space: nowrap; letter-spacing: .1px; }
    .badge { width: 24px; height: 24px; margin-left: 11px; border-radius: 12px; background: #0067c0; color: #fff; font-size: 14px; display: grid; place-items: center; }
  `;
  render() {
    return html`
      <div class="weather">${moon}<div><div class="temp">21°C</div><div class="sky">晴</div></div></div>
      ${startIcon}
      <div class="search">${magnifier}<span>搜尋</span><div class="art">${school}</div></div>
      ${apps.map((a) => html`<div class="app ${a.active ? "active" : ""} ${a.running ? "running" : ""}">${a.icon}</div>`)}
      <div class="up">${trayUp}</div><div class="ime">中</div>${wifi}<div class="mute">${mute}</div>${battery}
      <div class="clock"><div>下午 11:31</div><div>2023/4/16</div></div>
      <div class="badge">4</div>`;
  }
}

@customElement("app-root")
class AppRoot extends LitElement {
  static styles = css`
    :host { display: block; width: 1920px; height: 1080px; overflow: hidden; background: #fff; }
    .main { display: flex; height: 903px; }
    .page { position: relative; box-sizing: border-box; width: 1836px; height: 903px; border-top: 2px solid #bdbdbd; border-right: 1px solid #bdbdbd; background: #fff; }
    .activate { position: absolute; left: 1535px; top: 785px; color: #bcbcbc; font-family: "Noto Sans", "Noto Sans CJK TC", sans-serif; font-weight: 300; white-space: nowrap; }
    .big { font-size: 30px; line-height: 40px; letter-spacing: .5px; }
    .small { font-size: 22px; line-height: 27px; letter-spacing: .1px; }
  `;
  render() {
    return html`<browser-chrome></browser-chrome>
      <div class="main">
        <div class="page"><site-nav></site-nav><calculator-frame></calculator-frame>
          <div class="activate"><div class="big">啟用 Windows</div><div class="small">移至 [設定] 以啟用 Windows。</div></div>
        </div>
        <side-rail></side-rail>
      </div>
      <task-bar></task-bar>`;
  }
}
